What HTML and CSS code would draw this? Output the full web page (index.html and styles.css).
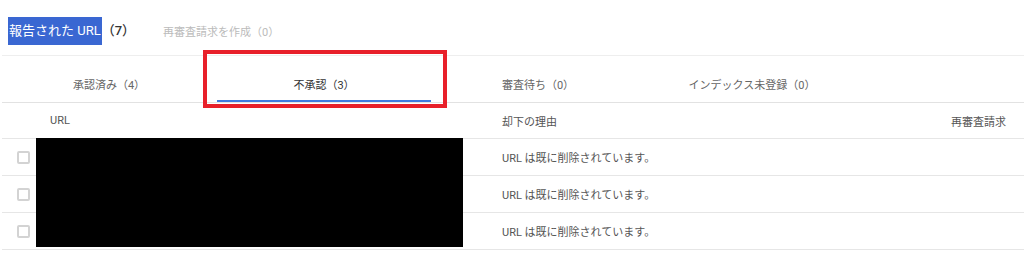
FILE: index.html
```html
<!DOCTYPE html>
<html>
<head>
  <meta http-equiv="Content-Type" content="text/html; charset=UTF-8" />
  <title>報告された URL</title>
  <link rel="stylesheet" href="styles.css">
</head>
<body>

<div class="page">
	<div class="head">
		<span class="title"><span class="sel">報告された URL</span>（7）</span>
		<span class="create">再審査請求を作成（0）</span>
	</div>

	<div class="tabs">
		<div class="tab">承認済み（4）</div>
		<div class="tab active">不承認（3）</div>
		<div class="tab">審査待ち（0）</div>
		<div class="tab">インデックス未登録（0）</div>
	</div>

	<div class="list">
		<div class="row headrow">
			<div class="cell"></div>
			<div class="cell url">URL</div>
			<div class="cell reason">却下の理由</div>
			<div class="cell req">再審査請求</div>
		</div>
		<div class="row">
			<div class="cell"><span class="check"></span></div>
			<div class="cell url"></div>
			<div class="cell reason">URL は既に削除されています。</div>
			<div class="cell req"></div>
		</div>
		<div class="row">
			<div class="cell"><span class="check"></span></div>
			<div class="cell url"></div>
			<div class="cell reason">URL は既に削除されています。</div>
			<div class="cell req"></div>
		</div>
		<div class="row">
			<div class="cell"><span class="check"></span></div>
			<div class="cell url"></div>
			<div class="cell reason">URL は既に削除されています。</div>
			<div class="cell req"></div>
		</div>
	</div>

	<!-- 黒塗り / 赤枠 -->
	<div class="redact"></div>
	<div class="mark"></div>
</div>

</body>
</html>
```

FILE: styles.css
```css
body{
	margin:0;
	background:#fff;
	font-family:Roboto, "Noto Sans CJK JP", sans-serif;
	font-size:11px;
	color:#555;
}
.page{
	position:relative;
	margin-left:2px;
}
.head{
	height:55px;
	display:flex;
	align-items:center;
	padding-top:6px;
	box-sizing:border-box;
}
.title{
	font-size:13px;
	font-weight:500;
	line-height:28px;
	color:#333;
	margin-left:6px;
}
.sel{
	background:#3a67d2;
	color:#fff;
	font-weight:400;
	padding:0 1px;
	display:inline-block;
}
.create{
	color:#bbb;
	margin-left:28px;
}
.tabs{
	display:flex;
	border-top:1px solid #eee;
	border-bottom:1px solid #e2e2e2;
}
.tab{
	width:214px;
	padding:22px 0 6px;
	line-height:16px;
	text-align:center;
	color:#666;
	border-bottom:2px solid transparent;
}
.tab.active{
	color:#333;
	border-bottom-color:#3f7be0;
	margin-left:1px;
}
.row{
	display:grid;
	grid-template-columns:34px 452px 1fr auto;
	height:36px;
	align-items:center;
	border-bottom:1px solid #e6e6e6;
}
.headrow{
	height:35px;
}
.url{
	padding-left:14px;
}
.reason{
	padding-left:14px;
}
.req{
	padding-right:18px;
}
.check{
	display:block;
	width:13px;
	height:13px;
	box-sizing:border-box;
	border:2px solid #d3d3d3;
	border-radius:2px;
	margin-left:15px;
}
.redact{
	position:absolute;
	left:34px;
	top:138px;
	width:427px;
	height:109px;
	background:#000;
}
.mark{
	position:absolute;
	left:201px;
	top:50px;
	width:236px;
	height:50px;
	border:4px solid #e8202a;
}
```
